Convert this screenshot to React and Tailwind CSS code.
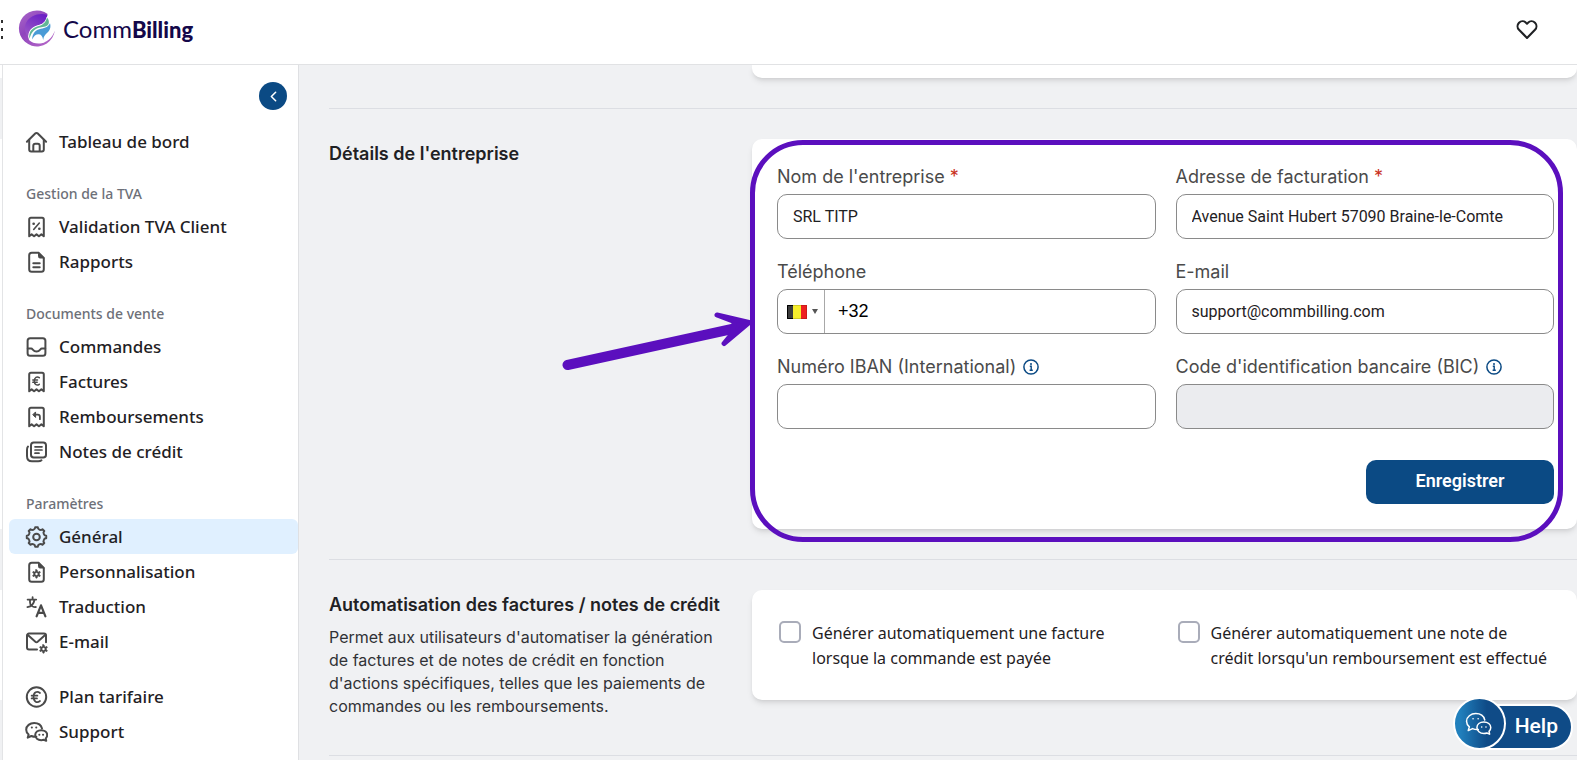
import { useState } from 'react';
import { ChevronLeft } from 'lucide-react';

const gearPath = (cx, cy, outer, inner, teeth, width) => {
  const point = (r, a) => `${(cx + r * Math.sin(a)).toFixed(2)} ${(cy - r * Math.cos(a)).toFixed(2)}`;
  const step = (Math.PI * 2) / teeth;
  let d = '';
  for (let i = 0; i < teeth; i++) {
    const a = i * step;
    d += `${i === 0 ? 'M' : 'L'}${point(outer, a - step * width)} L${point(outer, a + step * width)} Q${point(inner, a + step * (width + 0.04))} ${point(inner, a + step / 2)} Q${point(inner, a + step * (0.96 - width))} ${point(outer, a + step * (1 - width))}`;
  }
  return d + 'Z';
};

function Icon({ children }) {
  return (
    <svg viewBox="0 0 24 24" className="h-6 w-6 shrink-0" fill="none" stroke="#4a4a4a" strokeWidth="2" strokeLinecap="round" strokeLinejoin="round" aria-hidden="true">
      {children}
    </svg>
  );
}

const Receipt = () => (
  <path d="M5.200 21.300V4.500a1.700 1.700 0 0 1 1.700-1.700h11.200a1.700 1.700 0 0 1 1.700 1.700v16.800l-2.430-1.900-2.430 1.900-2.430-1.900-2.430 1.900-2.430-1.900z" />
);

const Doc = () => (
  <>
    <path d="M14.500 2.800H7.700a2.500 2.500 0 0 0-2.500 2.500v13.900a2.500 2.500 0 0 0 2.500 2.500h9.600a2.500 2.500 0 0 0 2.500-2.500V8z" />
    <path d="M14.500 2.800V6.500a1.500 1.500 0 0 0 1.500 1.500h3.800z" fill="#4a4a4a" strokeWidth="1" />
  </>
);

const Star = ({ cx, cy }) => (
  <>
    <path d={gearPath(cx, cy, 4.1, 2.5, 6, 0.13)} fill="#4a4a4a" strokeWidth="0.900" />
    <circle cx={cx} cy={cy} r="1.200" fill="#fff" stroke="none" />
  </>
);

const Bubbles = () => (
  <>
    <path d="M12.400 16.800a9.600 9.600 0 0 1-5-.8l-3.700 1.700.9-3.200C3 13.100 2.200 11.600 2.200 9.700c0-4 3.800-6.700 8-6.700 4 0 7 2.300 7.800 5.500" />
    <path d="M17.200 10.200c3.400 0 6 2.100 6 4.900 0 1.300-.6 2.500-1.500 3.300l.5 2.400-2.400-1a8 8 0 0 1-2.600.4c-3.400 0-6-2.200-6-5.100s2.600-4.900 6-4.900z" />
    <path d="M7.800 7.500h.1M12.200 7.500h.1M15.300 14.700h.1M19 14.700h.1" />
  </>
);

const icons = {
  home: (
    <Icon>
      <path d="M2.900 11.800l8.300-8.300a1.800 1.800 0 0 1 2.600 0l8.300 8.300" />
      <path d="M5.200 9.800v9.600a2 2 0 0 0 2 2h10.600a2 2 0 0 0 2-2V9.800" />
      <path d="M9.300 21v-5.200a2 2 0 0 1 2-2h2.400a2 2 0 0 1 2 2V21" />
    </Icon>
  ),
  percent: (
    <Icon>
      <Receipt />
      <path d="M15.300 8l-5.600 6.500" strokeWidth="1.600" />
      <path d="M9.600 8.700h.1M15.300 13.800h.1" strokeWidth="2.600" />
    </Icon>
  ),
  report: (
    <Icon>
      <Doc />
      <path d="M9.300 13.300h6.400M9.300 17.300h6.400" />
    </Icon>
  ),
  inbox: (
    <Icon>
      <rect x="3.600" y="3.200" width="17.800" height="17.600" rx="2.500" />
      <path d="M3.800 13.500h3.400c1.600 0 1.800 3 5.300 3s3.700-3 5.300-3h3.400" />
    </Icon>
  ),
  euroReceipt: (
    <Icon>
      <Receipt />
      <path d="M15.300 7.700c-2.200-1.600-5-.6-5 3.300s2.800 4.900 5 3.300M8.800 9.900h4.700M8.800 12.200h4.400" strokeWidth="1.500" />
    </Icon>
  ),
  refund: (
    <Icon>
      <Receipt />
      <path d="M11.300 7.200L8.800 9.700l2.500 2.500z" fill="#4a4a4a" strokeWidth="1" />
      <path d="M11 9.700h2.800c1.500 0 2.100 1 2.100 2.200v2.300" strokeWidth="1.800" />
    </Icon>
  ),
  notes: (
    <Icon>
      <rect x="7" y="2.500" width="15" height="15" rx="2.800" />
      <path d="M11 6.800h7M11 10h7M11 13.200h4" strokeWidth="1.700" />
      <path d="M4 6.600c-.9.800-1 1.800-1 3.400v6c0 3.200 1.600 5.300 5 5.300h6.200c1.500 0 2.500-.3 3.300-1" />
    </Icon>
  ),
  gear: (
    <Icon>
      <path d={gearPath(12.5, 12, 9.8, 7.9, 8, 0.17)} />
      <circle cx="12.500" cy="12" r="3.300" />
    </Icon>
  ),
  docStar: (
    <Icon>
      <Doc />
      <Star cx={12.5} cy={14} />
    </Icon>
  ),
  translate: (
    <Icon>
      <path d="M3.600 4.600h8.600M8.600 2.200v2.400M6 4.800v2.400c0 3 2.600 5.200 5.800 4.800M10.400 5c-.6 4-3.200 6.600-7 7.200" strokeWidth="1.800" />
      <path d="M12.600 21.300l4.400-11 4.400 11M14 17.800h6" strokeWidth="2.200" />
    </Icon>
  ),
  mail: (
    <Icon>
      <path d="M13 19.400H5a2 2 0 0 1-2-2V5.600a2 2 0 0 1 2-2h15a2 2 0 0 1 2 2v6.700" />
      <path d="M3.600 4.800l7.500 6.800a2 2 0 0 0 2.800 0l7.500-6.800" />
      <Star cx={19.500} cy={19} />
    </Icon>
  ),
  euro: (
    <Icon>
      <circle cx="12.500" cy="12" r="9.700" />
      <path d="M16 8c-3-2.300-6.500-.8-6.500 4s3.500 6.300 6.500 4M7.600 10.700h5.800M7.600 13.400h5.400" strokeWidth="1.700" />
    </Icon>
  ),
  chat: (
    <Icon>
      <Bubbles />
    </Icon>
  ),
};

const menu = [
  { items: [['home', 'Tableau de bord']] },
  { title: 'Gestion de la TVA', items: [['percent', 'Validation TVA Client'], ['report', 'Rapports']] },
  {
    title: 'Documents de vente',
    items: [['inbox', 'Commandes'], ['euroReceipt', 'Factures'], ['refund', 'Remboursements'], ['notes', 'Notes de crédit']],
  },
  {
    title: 'Paramètres',
    items: [['gear', 'Général'], ['docStar', 'Personnalisation'], ['translate', 'Traduction'], ['mail', 'E-mail']],
  },
];

const footerMenu = [['euro', 'Plan tarifaire'], ['chat', 'Support']];

function MenuItem({ icon, label, active }) {
  return (
    <li>
      <a
        href="#"
        aria-current={active ? 'page' : undefined}
        className={`ml-1.5 flex h-[35px] items-center gap-[11px] rounded-md pl-[15px] text-[17px] font-medium text-[#1f2124] ${active ? 'bg-[#e0f0ff]' : ''}`}
      >
        {icons[icon]}
        <span className="pt-px">{label}</span>
      </a>
    </li>
  );
}

function Logo() {
  return (
    <a href="#" className="flex items-center gap-[7px]">
      <svg viewBox="0 0 38 38" className="h-[38px] w-[38px]" aria-hidden="true">
        <defs>
          <linearGradient id="moon" x1="0" y1="0.100" x2="0.700" y2="1">
            <stop offset="0" stopColor="#a864c8" />
            <stop offset="0.450" stopColor="#8f45bd" />
            <stop offset="1" stopColor="#b163c6" />
          </linearGradient>
          <linearGradient id="core" x1="0.800" y1="0" x2="0.200" y2="1">
            <stop offset="0" stopColor="#6a1fc6" />
            <stop offset="1" stopColor="#9a56c6" />
          </linearGradient>
        </defs>
        <path d="M29.700 4A18 18 0 1 0 36.800 20.500C34.500 28.500 28 33 21.500 33c-5.500 0-9.800-2.500-11.200-6.500L11 20 26.500 10z" fill="url(#moon)" />
        <path d="M29.500 5C22 2.500 12 5 8 13c-2 4.500-1.200 9.500 1.800 13.500l8-10.500 9-2.500z" fill="url(#core)" />
        <path d="M11 30c-2-7 1-11.500 6-13.800 4.500-1.600 9.500-1.500 11.700-9.200 3 2.500 4.300 6 3.800 12-1 6-4.500 9-5.500 13-5 2.500-12 2-16-2z" fill="#fff" />
        <path d="M11.400 28.800c-1-6.300 2-9.800 6-11.600 4.500-1.800 9.500-1.700 11.600-9.700 2.200 2.500 2.600 6 .6 7.800-2.600 2.200-6.600 1.600-10.200 3-4.300 1.800-6.300 5.300-8 10.500z" fill="#62b795" />
        <path d="M14.200 29.500c0-5.500 2.800-9.300 7-10.300 4.500-1 8.500-1.200 10.800-5.900 1.200 4-.2 7.200-2.500 9.200-2.700 2.500-4 4.300-4.300 7.500-.6-3.700-2.200-5.700-4.700-5.700-2.700 0-4.700 1.700-6.300 5.200z" fill="#4a9bd6" />
      </svg>
      <span className="font-[Lato,sans-serif] text-[24px] leading-8 text-[#14084a]">
        Comm<span className="text-[22px] font-black">Billing</span>
      </span>
    </a>
  );
}

const inputClass =
  "h-[45px] w-full rounded-[10px] border border-[#8a8a8a] bg-white px-[15px] font-[Roboto,sans-serif] text-[16px] text-[#1f2124] outline-none disabled:bg-[#ebecef]";

function InfoIcon() {
  return (
    <svg viewBox="0 0 16 16" className="h-4 w-4" fill="none" stroke="#0b4a84" aria-hidden="true">
      <circle cx="8" cy="8" r="7.100" strokeWidth="1.500" />
      <path d="M6.800 7.300H8.200v4M6.600 11.300h3.200" strokeWidth="1.400" />
      <circle cx="8" cy="4.900" r="1" fill="#0b4a84" stroke="none" />
    </svg>
  );
}

function Field({ id, label, required, info, children }) {
  return (
    <div className="flex flex-col gap-1">
      <label htmlFor={id} className="flex items-center gap-[7px] text-[18px] leading-[26px] text-[#4a4a4a]">
        <span>
          {label}
          {required && <span className="text-[#c9301c]"> *</span>}
        </span>
        {info && <InfoIcon />}
      </label>
      {children}
    </div>
  );
}

function CheckField({ label }) {
  return (
    <label className="flex items-start gap-[11px] pl-0.5 font-['Noto_Sans',sans-serif] text-[16px] leading-[25px] text-[#1f2124]">
      <input type="checkbox" className="h-[22px] w-[22px] shrink-0 appearance-none rounded-[5px] border-2 border-[#a9acb9] bg-white checked:bg-[#0b4a84]" />
      <span>{label}</span>
    </label>
  );
}

export default function App() {
  const [company, setCompany] = useState('SRL TITP');
  const [address, setAddress] = useState('Avenue Saint Hubert 57090 Braine-le-Comte');
  const [phone, setPhone] = useState('+32');
  const [email, setEmail] = useState('support@commbilling.com');
  const [iban, setIban] = useState('');

  return (
    <div className="flex h-screen flex-col overflow-hidden bg-[#f0f1f3] font-[Inter,sans-serif]">
      <header className="flex h-[65px] shrink-0 items-center justify-between border-b border-[#e1e2e4] bg-white pr-[38px] pb-1.5">
        <div className="flex items-center gap-[15px]">
          <div className="flex w-[3px] flex-col items-end gap-[5px]" aria-hidden="true">
            <span className="h-[3px] w-0.5 bg-[#303030]" />
            <span className="h-[3px] w-0.5 bg-[#303030]" />
            <span className="h-[3px] w-0.5 bg-[#303030]" />
          </div>
          <Logo />
        </div>
        <button type="button" aria-label="Favoris">
          <svg viewBox="0 0 24 24" className="h-6 w-6" fill="none" stroke="#1f2124" strokeWidth="2.100" strokeLinejoin="round">
            <path d="M12 20.900l-8-8.200a5 5 0 0 1 0-7 5 5 0 0 1 7 0l1 .9 1-.9a5 5 0 0 1 7 0 5 5 0 0 1 0 7z" />
          </svg>
        </button>
      </header>

      <div className="flex min-h-0 flex-1">
        {/* edge of the cards hidden behind the menu */}
        <div className="flex w-[3px] shrink-0 flex-col border-r border-[#e3e4e6]">
          <div className="h-[13px] bg-white" />
          <div className="mt-[61px] h-[390px] bg-white" />
          <div className="mt-[61px] h-[110px] bg-white" />
        </div>
        <aside className="flex w-[296px] shrink-0 flex-col overflow-hidden border-r border-[#dfe0e3] bg-white font-['Noto_Sans',sans-serif]">
          <div className="flex h-[59px] shrink-0 justify-end pt-[17px] pr-[11px]">
            <button type="button" aria-label="Réduire le menu" className="flex h-7 w-7 items-center justify-center rounded-full bg-[#0b4a84] text-white">
              <ChevronLeft size={17} strokeWidth={2.2} />
            </button>
          </div>
          <nav>
            {menu.map((group, i) => (
              <div key={i}>
                {group.title && <h2 className="flex h-[50px] items-end pb-1 pl-[23px] text-[14px] leading-[22px] font-medium text-[#6d7078]">{group.title}</h2>}
                <ul>
                  {group.items.map(([icon, label]) => (
                    <MenuItem key={label} icon={icon} label={label} active={label === 'Général'} />
                  ))}
                </ul>
              </div>
            ))}
            <ul className="mt-5">
              {footerMenu.map(([icon, label]) => (
                <MenuItem key={label} icon={icon} label={label} />
              ))}
            </ul>
          </nav>
        </aside>

        <main className="min-w-0 flex-1 overflow-hidden pl-[30px]">
          <div className="ml-[423px] h-[13px] rounded-b-[10px] bg-white shadow-md" />

          <section className="mt-[30px] flex border-t border-[#dcdee3] pt-[30px] pb-[30px]">
            <div className="w-[423px] shrink-0">
              <h2 className="text-[18px] leading-[30px] font-semibold text-[#1f2124]">Détails de l'entreprise</h2>
            </div>
            <form className="relative min-w-0 flex-1 rounded-[10px] bg-white py-[25px] pr-[23px] pl-[25px] shadow-md" onSubmit={(e) => e.preventDefault()}>
              <div className="grid grid-cols-2 gap-5">
                <Field id="company" label="Nom de l'entreprise" required>
                  <input id="company" className={inputClass} value={company} onChange={(e) => setCompany(e.target.value)} />
                </Field>
                <Field id="address" label="Adresse de facturation" required>
                  <input id="address" className={inputClass} value={address} onChange={(e) => setAddress(e.target.value)} />
                </Field>
                <Field id="phone" label="Téléphone">
                  <div className="flex h-[45px] overflow-hidden rounded-[10px] border border-[#8a8a8a] bg-white">
                    <button type="button" aria-label="Pays" className="flex w-[47px] shrink-0 items-center gap-[5px] border-r border-[#a8a8a8] pl-[9px]">
                      <svg viewBox="0 0 20 14" className="h-3.5 w-5" aria-hidden="true">
                        <path d="M0 0h6v14H0z" fill="#3b3b3b" />
                        <path d="M6 0h8v14H6z" fill="#f7ee2c" />
                        <path d="M14 0h6v14h-6z" fill="#ee2020" />
                        <path d="M0.500 0.500h19v13H0.500z" fill="none" stroke="#000" strokeOpacity="0.150" />
                        <path d="M0.500 0.500H6M0.500 0.500v13H6" fill="none" stroke="#000" />
                      </svg>
                      <svg viewBox="0 0 6 5" className="h-[5px] w-1.5" aria-hidden="true">
                        <path d="M0 0h6L3 5z" fill="#555" />
                      </svg>
                    </button>
                    <input id="phone" type="tel" className="min-w-0 flex-1 px-[13px] font-['Liberation_Sans',sans-serif] text-[18px] text-black outline-none" value={phone} onChange={(e) => setPhone(e.target.value)} />
                  </div>
                </Field>
                <Field id="email" label="E-mail">
                  <input id="email" type="email" className={inputClass} value={email} onChange={(e) => setEmail(e.target.value)} />
                </Field>
                <Field id="iban" label="Numéro IBAN (International)" info>
                  <input id="iban" className={inputClass} value={iban} onChange={(e) => setIban(e.target.value)} />
                </Field>
                <Field id="bic" label="Code d'identification bancaire (BIC)" info>
                  <input id="bic" className={inputClass} disabled />
                </Field>
              </div>
              <div className="mt-[31px] flex justify-end">
                <button type="submit" className="h-11 w-[188px] rounded-[10px] bg-[#0b4a84] pb-1 font-[Roboto,sans-serif] text-[18px] font-semibold text-white">
                  Enregistrer
                </button>
              </div>

              {/* highlight frame and arrow */}
              <div className="pointer-events-none absolute top-px right-3.5 -bottom-[13px] -left-0.5 rounded-[53px] border-5 border-[#5b0fbe]" />
              <svg viewBox="0 0 192 62" className="pointer-events-none absolute top-[169px] right-full h-[62px] w-[192px]" fill="#5b0fbe" stroke="#5b0fbe" strokeLinecap="round" strokeLinejoin="round" aria-hidden="true">
                <path d="M7.500 57L172 21" strokeWidth="10" />
                <path d="M157 7l32 7.500-25 21 9-11 1-11z" strokeWidth="5" />
              </svg>
            </form>
          </section>

          <section className="flex border-t border-[#dcdee3] pt-[30px] pb-[30px]">
            <div className="w-[423px] shrink-0 pb-[7px]">
              <h2 className="text-[18px] leading-[30px] font-semibold text-[#1f2124]">Automatisation des factures / notes de crédit</h2>
              <p className="mt-1.5 w-[405px] text-[16px] leading-[23px] text-[#303236]">
                Permet aux utilisateurs d'automatiser la génération de factures et de notes de crédit en fonction d'actions spécifiques, telles que les paiements de commandes ou les remboursements.
              </p>
            </div>
            <div className="grid min-w-0 flex-1 grid-cols-2 gap-5 self-start rounded-[10px] bg-white pt-[31px] pr-[23px] pb-[29px] pl-[25px] shadow-md">
              <CheckField label="Générer automatiquement une facture lorsque la commande est payée" />
              <CheckField label="Générer automatiquement une note de crédit lorsqu'un remboursement est effectué" />
            </div>
          </section>
          <div className="border-t border-[#dcdee3]" />
        </main>
      </div>

      <button type="button" className="fixed right-1 bottom-2.5 flex items-end font-[Roboto,sans-serif]">
        <span className="z-10 -mr-[26px] flex h-[53px] w-[53px] items-center justify-center rounded-full border-2 border-white bg-linear-to-r from-[#2180bd] from-10% to-[#0f4b87] to-65%">
          <svg viewBox="0 0 26 24" className="h-7 w-[30px]" fill="none" stroke="#fff" strokeWidth="1.300" strokeLinecap="round" strokeLinejoin="round" aria-hidden="true">
            <Bubbles />
          </svg>
        </span>
        <span className="flex h-[46px] items-center rounded-r-full border-2 border-white bg-[#0f4b87] pr-[13px] pl-[33px] text-[21px] font-medium text-white">Help</span>
      </button>
    </div>
  );
}
